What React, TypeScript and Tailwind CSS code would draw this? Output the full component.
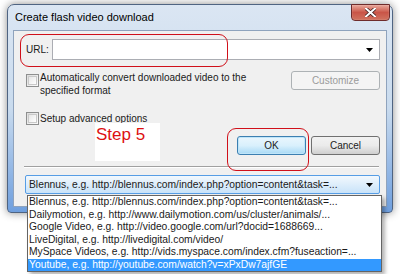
import React from "react";

const items = [
  "Blennus, e.g. http://blennus.com/index.php?option=content&task=...",
  "Dailymotion, e.g. http://www.dailymotion.com/us/cluster/animals/...",
  "Google Video, e.g. http://video.google.com/url?docid=1688669...",
  "LiveDigital, e.g. http://livedigital.com/video/",
  "MySpace Videos, e.g. http://vids.myspace.com/index.cfm?fuseaction=...",
  "Youtube, e.g. http://youtube.com/watch?v=xPxDw7ajfGE",
];

function Checkbox() {
  return (
    <div className="w-[13px] h-[13px] shrink-0 border border-[#8e8f8f] bg-gradient-to-br from-[#dcdcdc] to-[#fbfbfb] p-[1px]">
      <div className="w-full h-full border border-[#c9c9c9] bg-gradient-to-br from-[#e6e6e6] to-[#ffffff]" />
    </div>
  );
}

function Arrow() {
  return (
    <svg width="7" height="4" viewBox="0 0 7 4">
      <path d="M0 0 L7 0 L3.5 4 Z" fill="#000" />
    </svg>
  );
}

export default function App() {
  return (
    <div
      className="relative w-[400px] h-[274px] bg-white overflow-hidden"
      style={{ fontFamily: '"Liberation Sans", Arial, sans-serif' }}
    >
      <div className="pt-[4px] pl-[7px]">
        {/* window */}
        <div className="relative w-[386px] h-[209px] rounded-t-[7px] rounded-b-[4px] border border-[#4f6482] bg-gradient-to-b from-[#dbe6f3] via-[#c9dbee] to-[#6f9fde] shadow-[0_0_8px_rgba(0,0,0,0.45)] flex flex-col px-[5px] pb-[5px]">
          {/* title bar */}
          <div className="h-[25px] flex items-center pl-[2px] text-[11px] text-black">
            Create flash video download
          </div>
          {/* close button */}
          <div className="absolute right-[2px] top-[-1px] w-[39px] h-[17px] rounded-b-[4px] border border-[#6e2c2c] bg-gradient-to-b from-[#e8a89c] via-[#c95548] to-[#d0725f] flex items-center justify-center shadow-[inset_0_0_1px_rgba(255,255,255,0.8)]">
            <svg width="11" height="9" viewBox="0 0 11 9">
              <path d="M1 0.5 L10 8.5 M10 0.5 L1 8.5" stroke="#3a1a1a" strokeWidth="3.4" strokeLinecap="square" />
              <path d="M1 0.5 L10 8.5 M10 0.5 L1 8.5" stroke="#ffffff" strokeWidth="2" strokeLinecap="square" />
            </svg>
          </div>
          {/* client area */}
          <div className="relative flex-1 border border-[#8fa3bd] bg-[#f0f0f0] pl-[10px] pr-[6px] pt-[8px] text-[10px] text-[#1a1a1a] flex flex-col">
            {/* URL row */}
            <div className="flex items-center h-[21px]">
              <div className="w-[28px] pl-[2px]">URL:</div>
              <div className="flex-1 h-[21px] border border-[#abadb3] bg-white flex items-center justify-end pr-[6px]">
                <Arrow />
              </div>
            </div>
            {/* auto convert row */}
            <div className="flex mt-[11px] h-[34px]">
              <div className="pt-[3px] pl-[2px]">
                <Checkbox />
              </div>
              <div className="ml-[1px] leading-[13px] flex-1">
                Automatically convert downloaded video to the
                <br />
                specified format
              </div>
              <div className="w-[89px] h-[19px] border border-[#adb2b5] rounded-[3px] bg-[#f4f4f4] text-[#9b9b9b] flex items-center justify-center">
                Customize
              </div>
            </div>
            {/* advanced */}
            <div className="flex items-center mt-[6px] h-[14px]">
              <div className="pl-[2px]">
                <Checkbox />
              </div>
              <div className="ml-[1px]">Setup advanced options</div>
            </div>
            {/* buttons */}
            <div className="flex justify-end gap-[5px] mt-[11px]">
              <div className="w-[69px] h-[19px] rounded-[3px] border border-[#3c7fb1] bg-gradient-to-b from-[#eaf6fd] via-[#d9f0fc] to-[#a7d9f5] shadow-[inset_0_0_0_1px_#bfe5f9] flex items-center justify-center text-[#222]">
                OK
              </div>
              <div className="w-[69px] h-[19px] rounded-[3px] border border-[#707070] bg-gradient-to-b from-[#f2f2f2] via-[#ebebeb] to-[#cfcfcf] flex items-center justify-center text-[#222]">
                Cancel
              </div>
            </div>
            {/* separator */}
            <div className="mt-[11px] h-[2px] border-t border-[#a0a0a0] border-b border-b-white mr-[1px]" />
            {/* site combobox */}
            <div className="mt-[7px] h-[19px] ml-[1px] border border-[#569de5] bg-gradient-to-b from-[#f2f8fd] to-[#c9e3f9] flex items-center pl-[3px] pr-[6px] rounded-[2px]">
              <div className="flex-1 whitespace-nowrap overflow-hidden text-[10.3px]">{items[0]}</div>
              <Arrow />
            </div>

            {/* Step 5 annotation */}
            <div className="absolute left-[81px] top-[92px] w-[65px] h-[38px] bg-white">
              <div className="pl-[1px] pt-[2px] text-[17px] leading-[20px] text-[#dd1111]">Step 5</div>
            </div>
            {/* red rings */}
            <div className="absolute left-[6px] top-[3px] w-[208px] h-[33px] rounded-[9px] border-[1.5px] border-[#d0101a]" />
            <div className="absolute left-[213px] top-[97px] w-[82px] h-[43px] rounded-[9px] border-[1.5px] border-[#d0101a]" />
          </div>
        </div>
      </div>

      {/* dropdown list popup */}
      <div className="absolute left-[27px] top-[195px] w-[355px] h-[77px] border border-[#646464] bg-white shadow-[3px_3px_4px_rgba(0,0,0,0.3)] text-[10.3px] text-[#1a1a1a] flex flex-col">
        {items.map((t, i) => (
          <div
            key={i}
            className={
              "h-[12.5px] leading-[12.5px] pl-[1px] whitespace-nowrap overflow-hidden " +
              (i === 5 ? "bg-[#3399ff] text-white" : "")
            }
          >
            {t}
          </div>
        ))}
      </div>
    </div>
  );
}
